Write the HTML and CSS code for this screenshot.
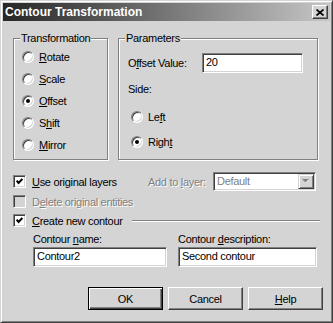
FILE: index.html
```html
<!DOCTYPE html>
<html lang="en">
<head>
  <meta charset="UTF-8">
  <title>Contour Transformation</title>
  <link rel="stylesheet" href="styles.css">
</head>
<body>
  <div class="window">
    <div class="titlebar">
      <span class="title">Contour Transformation</span>
      <span class="close">
        <svg width="8" height="7" viewBox="0 0 8 7"><path d="M0.5 0.5 L7.5 6.5 M7.5 0.5 L0.5 6.5" stroke="#000" stroke-width="1.7" fill="none"/></svg>
      </span>
    </div>
    <div class="content">
      <div class="groups">
        <div class="group transform">
          <span class="group-title">Transformation</span>
          <div class="options">
            <div class="option"><span class="radio"></span><span><u>R</u>otate</span></div>
            <div class="option"><span class="radio"></span><span><u>S</u>cale</span></div>
            <div class="option"><span class="radio on"></span><span><u>O</u>ffset</span></div>
            <div class="option"><span class="radio"></span><span>S<u>h</u>ift</span></div>
            <div class="option"><span class="radio"></span><span><u>M</u>irror</span></div>
          </div>
        </div>
        <div class="group params">
          <span class="group-title">Parameters</span>
          <div class="offset-row">
            <label>O<u>f</u>fset Value:</label>
            <div class="field offset-field">20</div>
          </div>
          <div class="side-label">Side:</div>
          <div class="side-options">
            <div class="option tall"><span class="radio"></span><span>Le<u>f</u>t</span></div>
            <div class="option tall"><span class="radio on"></span><span>Righ<u>t</u></span></div>
          </div>
        </div>
      </div>

      <div class="row layers-row">
        <div class="check-item wide"><span class="check"><svg width="7" height="7" viewBox="0 0 7 7"><path d="M0.7 2.6 L2.6 4.9 L6.4 0.9" stroke="#000" stroke-width="2.1" fill="none"/></svg></span><span><u>U</u>se original layers</span></div>
        <span class="disabled">Add to <u>l</u>ayer:</span>
        <div class="combo">
          <span class="combo-text">Default</span>
          <span class="combo-btn"><svg width="8" height="5" viewBox="0 0 8 5"><path d="M1 1 H7 L4 4 Z" fill="#fff"/><path d="M0 0 H7 L3.5 3.5 Z" fill="#808080"/></svg></span>
        </div>
      </div>

      <div class="row delete-row">
        <div class="check-item"><span class="check off"></span><span class="disabled">D<u>e</u>lete original entities</span></div>
      </div>

      <div class="row create-row">
        <div class="check-item"><span class="check"><svg width="7" height="7" viewBox="0 0 7 7"><path d="M0.7 2.6 L2.6 4.9 L6.4 0.9" stroke="#000" stroke-width="2.1" fill="none"/></svg></span><span><u>C</u>reate new contour</span></div>
        <span class="etched"></span>
      </div>

      <div class="fields">
        <label>Contour <u>n</u>ame:</label>
        <label>Contour <u>d</u>escription:</label>
        <div class="field">Contour2</div>
        <div class="field">Second contour</div>
      </div>

      <div class="buttons">
        <button class="btn default">OK</button>
        <button class="btn">Cancel</button>
        <button class="btn"><u>H</u>elp</button>
      </div>
    </div>
  </div>
</body>
</html>
```

FILE: styles.css
```css
* { box-sizing:border-box; }
html, body { margin:0; padding:0; background:#d4d4d4; }
body { font-family:"Liberation Sans", Arial, sans-serif; font-size:11px; letter-spacing:-0.3px; color:#000; }
u { text-decoration:underline; text-underline-offset:1px; }

/* window frame */
.window { width:333px; height:323px; padding:2px; background:#d4d4d4; border:1px solid; border-color:#d4d4d4 #404040 #404040 #d4d4d4; box-shadow:inset 1px 1px #fff, inset -1px -1px #808080; }
.titlebar { height:18px; display:flex; align-items:center; padding:0 2px; background:linear-gradient(to right, #262626, #c6c6c6); }
.title { color:#fff; font-weight:bold; font-size:12px; letter-spacing:0; }
.close { margin-left:auto; width:16px; height:14px; display:flex; align-items:center; justify-content:center; background:#d4d4d4; border:1px solid; border-color:#fff #404040 #404040 #fff; box-shadow:inset -1px -1px #808080; }

.content { padding:0 12px 0 10px; }

/* group boxes */
.groups { display:flex; gap:10px; margin-top:17px; }
.group { height:122px; border:1px solid #808080; box-shadow:inset 1px 1px #fff, 1px 1px #fff; }
.transform { width:95px; }
.params { width:200px; padding-left:9px; }
.group-title { display:block; width:max-content; margin:-7px 0 0 6px; padding:0 1px; line-height:13px; background:#d4d4d4; }
.params .group-title { margin-left:-3px; }
.options { padding:1px 0 0 8px; }
.option { display:flex; align-items:center; gap:5px; height:22px; }
.option.tall { height:25px; }

.radio { width:12px; height:12px; border-radius:50%; background:#fff; border:1px solid; border-color:#808080 #fff #fff #808080; box-shadow:inset 1px 1px #404040, inset -1px -1px #d4d4d4; display:flex; align-items:center; justify-content:center; }
.radio.on::after { content:""; width:4px; height:4px; border-radius:50%; background:#000; }

.offset-row { display:flex; align-items:center; margin-top:8px; }
.offset-row label { width:74px; }
.offset-field { width:101px; height:19px; }
.side-label { margin-top:10px; line-height:13px; }
.side-options { margin-top:8px; padding-left:3px; }

/* sunken fields */
.field { height:20px; background:#fff; padding:0 3px; line-height:16px; border:1px solid; border-color:#808080 #fff #fff #808080; box-shadow:inset 1px 1px #404040, inset -1px -1px #d4d4d4; white-space:nowrap; }

/* checkbox rows */
.row { display:flex; align-items:center; }
.layers-row { height:19px; margin-top:12px; }
.delete-row { height:13px; margin-top:4px; }
.create-row { height:13px; margin-top:6px; }
.check-item { display:flex; align-items:center; gap:6px; }
.check-item.wide { width:135px; }
.check { width:13px; height:13px; background:#fff; border:1px solid; border-color:#808080 #fff #fff #808080; box-shadow:inset 1px 1px #404040, inset -1px -1px #d4d4d4; display:flex; align-items:center; justify-content:center; }
.check.off { background:#d4d4d4; }
.disabled { color:#808080; text-shadow:1px 1px #fff; }
.etched { flex:1; align-self:flex-start; height:2px; margin:6px -2px 0 9px; border-top:1px solid #808080; border-bottom:1px solid #fff; }

.combo { margin-left:auto; margin-right:2px; width:103px; height:19px; display:flex; background:#fff; border:1px solid; border-color:#808080 #fff #fff #808080; box-shadow:inset 1px 1px #404040, inset -1px -1px #d4d4d4; padding:1px; }
.combo-text { flex:1; color:#808080; padding-left:2px; line-height:15px; }
.combo-btn { width:16px; height:15px; background:#d4d4d4; display:flex; align-items:center; justify-content:center; border:1px solid; border-color:#d4d4d4 #404040 #404040 #d4d4d4; box-shadow:inset 1px 1px #fff, inset -1px -1px #808080; }

/* name and description */
.fields { display:grid; grid-template-columns:134px 139px; column-gap:11px; row-gap:1px; margin-top:6px; padding-left:20px; }
.fields label { line-height:13px; }

/* dialog buttons */
.buttons { display:flex; justify-content:flex-end; gap:5px; margin:20px -5px 0 0; }
.btn { width:75px; height:23px; padding:0; font:inherit; letter-spacing:inherit; color:#000; background:#d4d4d4; border:1px solid; border-color:#fff #404040 #404040 #fff; box-shadow:inset -1px -1px #808080; }
.btn.default { border:1px solid #000; box-shadow:inset 1px 1px #fff, inset -1px -1px #404040, inset -2px -2px #808080; }
```
